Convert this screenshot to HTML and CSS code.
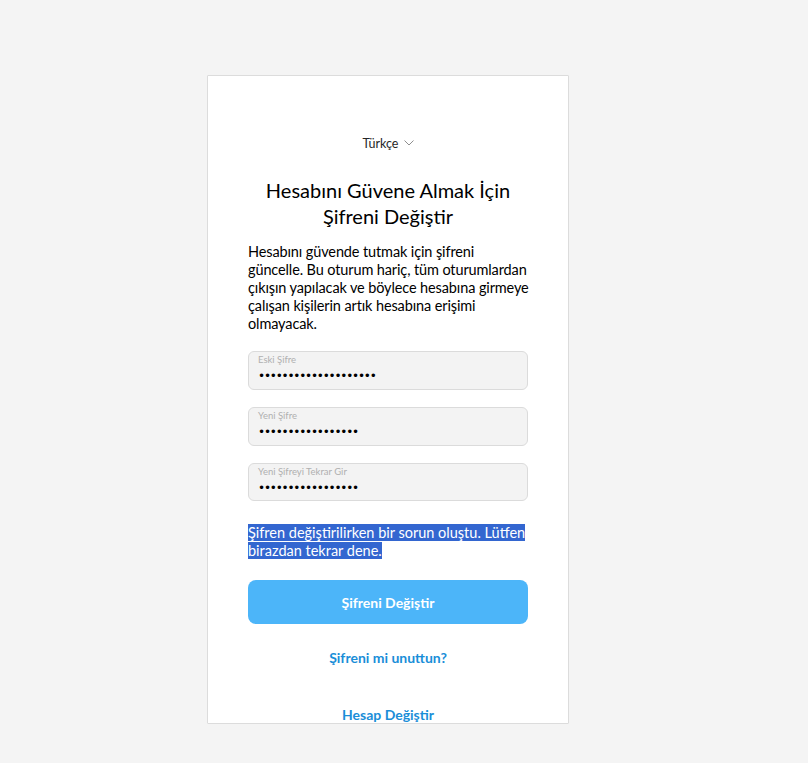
FILE: index.html
```html
<!DOCTYPE html>
<html lang="tr">
<head>
  <meta charset="UTF-8">
  <title>Şifreni Değiştir</title>
  <link rel="stylesheet" href="styles.css">
</head>
<body>

  <div class="card">
    <div class="lang">
      Türkçe
      <svg class="chev" width="10" height="6" viewBox="0 0 10 6"><path d="M0.5 0.5 L5 5 L9.5 0.5" fill="none" stroke="#8e8e8e" stroke-width="1"/></svg>
    </div>

    <h2 class="title">Hesabını Güvene Almak İçin Şifreni Değiştir</h2>

    <p class="intro">Hesabını güvende tutmak için şifreni<br>güncelle. Bu oturum hariç, tüm oturumlardan<br>çıkışın yapılacak ve böylece hesabına girmeye<br>çalışan kişilerin artık hesabına erişimi<br>olmayacak.</p>

    <div class="field">
      <span class="field-label">Eski Şifre</span>
      <span class="dots">••••••••••••••••••••</span>
    </div>
    <div class="field">
      <span class="field-label">Yeni Şifre</span>
      <span class="dots">•••••••••••••••••</span>
    </div>
    <div class="field">
      <span class="field-label">Yeni Şifreyi Tekrar Gir</span>
      <span class="dots">•••••••••••••••••</span>
    </div>

    <p class="error"><span class="sel">Şifren değiştirilirken bir sorun oluştu. Lütfen birazdan tekrar dene.</span></p>

    <button class="submit">Şifreni Değiştir</button>

    <a class="link forgot" href="#">Şifreni mi unuttun?</a>
    <a class="link switch" href="#">Hesap Değiştir</a>
  </div>

</body>
</html>
```

FILE: styles.css
```css
body {
  margin: 0;
  background: #f4f4f4;
  font-family: Lato, "Noto Sans", sans-serif;
  color: #000;
}
.card {
  margin: 75px 0 0 207px;
  width: 280px;
  height: 647px;
  padding: 0 40px;
  background: #fff;
  border: 1px solid #dcdcdc;
  border-radius: 1px;
  overflow: hidden;
  display: flex;
  flex-direction: column;
}
.lang {
  margin-top: 60px;
  font-size: 12.5px;
  line-height: 16px;
  color: #262626;
  text-align: center;
}
.chev {
  margin-left: 2px;
  vertical-align: 2px;
}
.title {
  margin: 25px 0 0;
  font-size: 20px;
  font-weight: 400;
  line-height: 26px;
  text-align: center;
  padding: 0 12px;
}
.intro {
  margin: 14px 0 18px;
  font-size: 14.5px;
  line-height: 18px;
  letter-spacing: -0.12px;
  white-space: nowrap;
}
.field {
  height: 37px;
  margin-bottom: 17px;
  padding: 0 9px;
  background: #f3f3f3;
  border: 1px solid #dbdbdb;
  border-radius: 6px;
  display: flex;
  flex-direction: column;
}
.field-label {
  margin-top: 2px;
  font-size: 9.5px;
  line-height: 12px;
  color: #b0b0b0;
}
.dots {
  margin-top: 3px;
  font-family: "DejaVu Sans", sans-serif;
  font-size: 12px;
  line-height: 14px;
  letter-spacing: -1.2px;
}
.error {
  margin: 6px 0 20px;
  font-size: 14.5px;
  line-height: 18px;
}
.sel {
  background: #3366d0;
  color: #fff;
}
.submit {
  height: 44px;
  border: none;
  border-radius: 8px;
  background: #4cb5f9;
  color: #fff;
  font-family: inherit;
  font-size: 14px;
  font-weight: 700;
  cursor: pointer;
}
.link {
  color: #1a8ed8;
  font-size: 14px;
  font-weight: 700;
  text-decoration: none;
  text-align: center;
}
.forgot {
  margin-top: 25px;
}
.switch {
  margin-top: 40px;
}
```
